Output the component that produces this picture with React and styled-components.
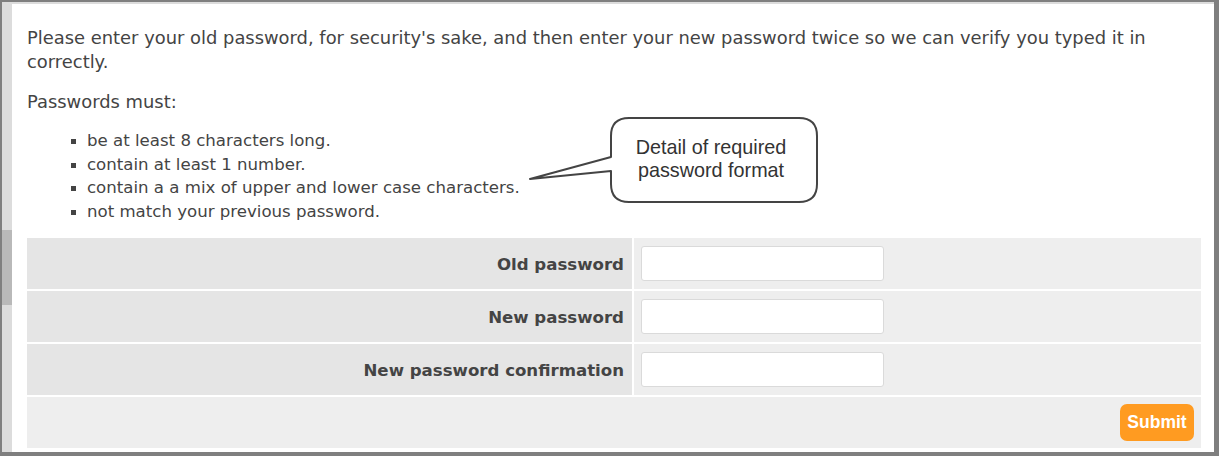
import React from "react";
import styled, { createGlobalStyle } from "styled-components";

const GlobalStyle = createGlobalStyle`
  html, body {
    margin: 0;
    padding: 0;
    background: #fff;
  }
  * { box-sizing: border-box; }
`;

const rules = [
  "be at least 8 characters long.",
  "contain at least 1 number.",
  "contain a a mix of upper and lower case characters.",
  "not match your previous password.",
];

const fields = ["Old password", "New password", "New password confirmation"];

export default function App() {
  return (
    <>
      <GlobalStyle />
      <Frame>
        <Track>
          <Thumb />
        </Track>
        <Content>
          <Intro>
            Please enter your old password, for security's sake, and then enter your new
            password twice so we can verify you typed it in correctly.
          </Intro>
          <Intro>Passwords must:</Intro>
          <Rules>
            {rules.map((r) => (
              <li key={r}>{r}</li>
            ))}
          </Rules>
          <Callout>
            <svg width="292" height="92" viewBox="0 0 292 92">
              <path
                d="M84 22 Q84 4 102 4 L272 4 Q290 4 290 22 L290 70 Q290 88 272 88 L102 88 Q84 88 84 70 L84 57 L3 65 L84 43 Z"
                fill="#fff"
                stroke="#444"
                strokeWidth="2"
                strokeLinejoin="round"
              />
            </svg>
            <CalloutText>
              Detail of required
              <br />
              password format
            </CalloutText>
          </Callout>
          <FormGrid>
            {fields.map((f) => (
              <React.Fragment key={f}>
                <Label>{f}</Label>
                <Field>
                  <Input type="password" />
                </Field>
              </React.Fragment>
            ))}
            <Actions>
              <Submit>Submit</Submit>
            </Actions>
          </FormGrid>
        </Content>
      </Frame>
    </>
  );
}

const Frame = styled.div`
  display: flex;
  width: 1219px;
  height: 456px;
  border: 2px solid #7f7f7f;
  border-right-width: 5px;
  border-bottom-width: 4px;
  background: #fff;
  overflow: hidden;
`;

const Track = styled.div`
  width: 10px;
  flex-shrink: 0;
  background: #dcdcdc;
  display: flex;
  flex-direction: column;
`;

const Thumb = styled.div`
  margin-top: 228px;
  height: 75px;
  background: #b9b9b9;
`;

const Content = styled.div`
  position: relative;
  flex: 1;
  border-top: 2px solid #dcdcdc;
  padding: 22px 13px 0 15px;
  font-family: "DejaVu Sans", Verdana, sans-serif;
  color: #444;
`;

const Intro = styled.p`
  margin: 0 0 15.5px;
  font-size: 17.9px;
  line-height: 24px;
`;

const Rules = styled.ul`
  margin: 0 0 14.75px;
  padding-left: 60px;
  list-style: square;
  font-size: 16.6px;
  line-height: 23.5px;

  li::marker {
    font-size: 15px;
  }
`;

const Callout = styled.div`
  position: absolute;
  left: 515px;
  top: 110px;
  width: 292px;
  height: 92px;

  svg {
    display: block;
  }
`;

const CalloutText = styled.div`
  position: absolute;
  left: 82px;
  right: 6px;
  top: 22px;
  text-align: center;
  font-family: "Liberation Sans", Arial, sans-serif;
  font-size: 19.8px;
  line-height: 23px;
  color: #333;
`;

const FormGrid = styled.div`
  display: grid;
  grid-template-columns: 605px 1fr;
  grid-auto-rows: 51px;
  gap: 2px;
`;

const Label = styled.div`
  display: flex;
  align-items: center;
  justify-content: flex-end;
  padding: 3px 8px 0 0;
  background: #e5e5e5;
  font-weight: bold;
  font-size: 16.6px;
  color: #444;
`;

const Field = styled.div`
  display: flex;
  align-items: center;
  padding-left: 7px;
  background: #eeeeee;
`;

const Input = styled.input`
  width: 243px;
  height: 35px;
  border: 1px solid #dadada;
  border-radius: 3px;
  background: #fff;
  outline: none;
`;

const Actions = styled.div`
  grid-column: 1 / -1;
  display: flex;
  align-items: center;
  justify-content: flex-end;
  padding-right: 7px;
  background: #eeeeee;
`;

const Submit = styled.button`
  width: 74px;
  height: 37px;
  border: none;
  border-radius: 7px;
  background: #ff9b21;
  color: #fff;
  font-family: "Liberation Sans", Arial, sans-serif;
  font-weight: bold;
  font-size: 17.5px;
  padding: 0;
  cursor: pointer;
`;
